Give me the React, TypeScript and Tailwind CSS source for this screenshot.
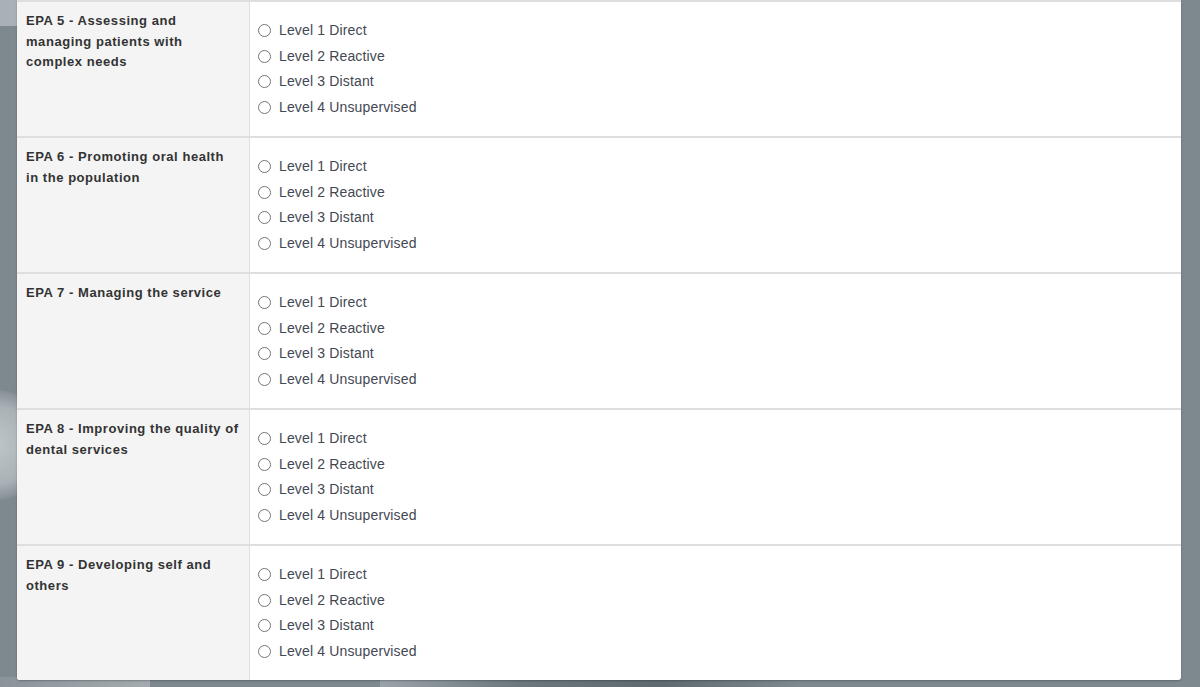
import React from "react";

const epas = [
  "EPA 5 - Assessing and managing patients with complex needs",
  "EPA 6 - Promoting oral health in the population",
  "EPA 7 - Managing the service",
  "EPA 8 - Improving the quality of dental services",
  "EPA 9 - Developing self and others",
];

const levels = ["Level 1 Direct", "Level 2 Reactive", "Level 3 Distant", "Level 4 Unsupervised"];

export default function App() {
  return (
    <div
      className="w-[1200px] h-[687px] overflow-hidden bg-[#7e888f] relative"
      style={{ fontFamily: '"Liberation Sans", Arial, sans-serif' }}
    >
      <div className="absolute left-0 top-0 w-[40px] h-[26px] bg-[#a9b1b6]" />
      <div className="absolute left-[-60px] top-[390px] w-[110px] h-[110px] rounded-full bg-[radial-gradient(circle,#bfc6ca_0%,#a9b1b6_50%,#7e888f_75%)]" />
      <div className="absolute left-0 bottom-0 w-[150px] h-[10px] bg-[linear-gradient(90deg,#8a9399,#a3abb0)]" />
      <div className="absolute left-[380px] bottom-0 w-[420px] h-[10px] bg-[linear-gradient(90deg,#9aa3a9,#6b767d,#5e6970,#7e888f)]" />
      <div className="relative ml-[17px] w-[1164px] flex flex-col rounded-b-[3px] overflow-hidden shadow-[0_1px_2px_rgba(0,0,0,0.25)]">
        {epas.map((epa, i) => (
          <div key={i} className="flex h-[136px] border-t-2 border-[#dedede] bg-white">
            <div className="w-[233px] shrink-0 bg-[#f4f4f4] border-r border-[#dedede] pl-[9px] pr-[9px] pt-[9px] text-[13px] leading-[20.5px] tracking-[0.55px] font-bold text-[#333]">
              {epa}
            </div>
            <div className="flex-1 pl-[8px] pt-[16px] flex flex-col">
              {levels.map((l) => (
                <label key={l} className="flex items-center h-[25.5px] text-[14px] tracking-[0.15px] text-[#434852]">
                  <span className="w-[13px] h-[13px] rounded-full border border-[#767676] bg-white mr-[8px] shrink-0" />
                  {l}
                </label>
              ))}
            </div>
          </div>
        ))}
      </div>
    </div>
  );
}
